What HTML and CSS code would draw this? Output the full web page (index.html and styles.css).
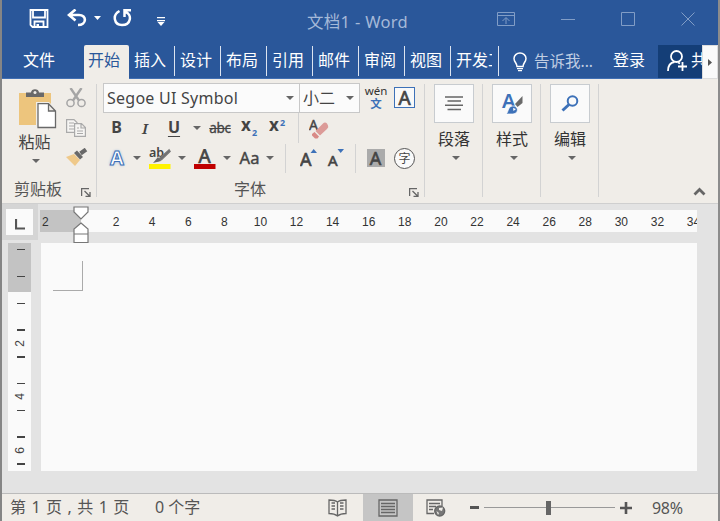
FILE: index.html
```html
<!DOCTYPE html>
<html lang="zh-CN">
<head>
<meta charset="utf-8">
<title>文档1 - Word</title>
<link rel="stylesheet" href="styles.css">
</head>
<body>
<div class="window">
  <header class="titlebar">
    <div class="quick">
      <svg class="save" width="20" height="20" viewBox="0 0 20 20"><path d="M1.500 1H18.500V18H3.500L1.500 16ZM4 1V8.500H16V1M5.500 18V12.500H14.500V18" fill="none" stroke="#fff" stroke-width="1.800"/><path d="M7.500 15h2.500v3H7.500z" fill="#fff"/></svg>
      <svg class="undo" width="20" height="20" viewBox="0 0 20 20"><path d="M2 6H12C20 6 20 16 11 16M8.500.5L2 6L8.500 11.500" fill="none" stroke="#fff" stroke-width="2.600"/></svg>
      <svg class="undo-arrow" width="7" height="4" viewBox="0 0 7 4"><path d="M0 0H7L3.500 4Z" fill="#fff"/></svg>
      <svg class="redo" width="20" height="20" viewBox="0 0 20 20"><path d="M6.500 2C-1 6 1 16 9 16C18 16 19.500 5.500 12.500 3M18 1.300H11.500V8" fill="none" stroke="#fff" stroke-width="2.500"/></svg>
      <svg class="customize" width="8" height="9" viewBox="0 0 8 9"><path d="M0 0H8V1.300H0ZM0 3H8V4.300H0ZM.5 5H7.500L4 9Z" fill="#fff"/></svg>
    </div>
    <div class="doc-title">文档1 - Word</div>
    <div class="controls">
      <svg width="18" height="14" viewBox="0 0 18 14"><path d="M.5.5H17.500V13.500H.5ZM.5 3.500H17.500M9 12V6M5.500 9L9 5.500L12.500 9"/></svg>
      <svg width="14" height="14" viewBox="0 0 14 14"><path d="M0 7.500H14"/></svg>
      <svg width="14" height="14" viewBox="0 0 14 14"><path d="M.5.5H13.500V13.500H.5Z"/></svg>
      <svg width="14" height="14" viewBox="0 0 14 14"><path d="M.5.5L13.500 13.500M13.500.5L.5 13.500"/></svg>
    </div>
  </header>

  <nav class="tabs">
    <div class="file">文件</div>
    <div class="tab active">开始</div>
    <div class="tab">插入</div>
    <div class="tab">设计</div>
    <div class="tab">布局</div>
    <div class="tab">引用</div>
    <div class="tab">邮件</div>
    <div class="tab">审阅</div>
    <div class="tab">视图</div>
    <div class="tab dev"><span>开发工</span></div>
    <div class="tell">
      <svg width="14" height="20" viewBox="0 0 14 20"><path d="M4 14.500C4 11 1 10 1 6.500A6 5.500 0 0 1 13 6.500C13 10 10 11 10 14.500Z" fill="none" stroke="#fff" stroke-width="1.500"/><path d="M4 16H10V17.200H4ZM5 18H9V19.300H5Z" fill="#fff"/></svg>
      <span>告诉我...</span>
    </div>
    <div class="login">登录</div>
    <div class="share">
      <svg width="21" height="22" viewBox="0 0 21 22"><circle cx="9.500" cy="6.500" r="5.500"/><path d="M1 21C1 15 4 12.500 7.500 12M11 12.500L13 13.500M15.500 12V21M11 16.500H20"/></svg>
      <span>共</span>
    </div>
    <div class="scroll"><svg width="4" height="7" viewBox="0 0 4 7"><path d="M0 0L4 3.500L0 7Z" fill="#555"/></svg></div>
  </nav>

  <section class="ribbon">
    <div class="group clipboard">
      <div class="clip-main">
        <div class="paste">
          <svg width="38" height="40" viewBox="0 0 38 40"><path d="M0 4H32V36H0Z" fill="#edc57d"/><path d="M7 8V3.500H12C12-1 20-1 20 3.500H25V8Z" fill="#696969"/><circle cx="16" cy="3.500" r="1.500" fill="#f0ede8"/><path d="M17 13H30L38 21V40H17Z" fill="#f0ede8"/><path d="M19 14.700H29.500L36.500 22V38.500H19ZM29.500 14.700V22H36.500" fill="#fff" stroke="#696969" stroke-width="1.300"/></svg>
          <span>粘贴</span>
          <i class="arrow"></i>
        </div>
        <div class="clip-tools">
          <svg width="20" height="20" viewBox="0 0 20 20"><path d="M4.500 0L13 12.500M15.500 0L7 12.500" fill="none" stroke="#a5a5a5" stroke-width="2.400"/><g fill="none" stroke="#a5a5a5" stroke-width="1.500"><circle cx="4.500" cy="15" r="3.600"/><circle cx="15.500" cy="15" r="3.600"/></g></svg>
          <svg width="20" height="18" viewBox="0 0 20 18"><g fill="#f6f5f3" stroke="#aaa" stroke-width="1.200"><path d="M.6.6H8L11 3.500V13.400H.6Z"/><path d="M3 4H8M3 7H8M3 10H8"/><path d="M8.600 4.600H15.500L19.400 8.500V17.400H8.600ZM15 5V9H19M11 9H13M11 12H17M11 14.500H17"/></g></svg>
          <svg width="22" height="19" viewBox="0 0 22 19"><path d="M0 9L8 6L14 12L9 18Z" fill="#efc98a"/><path d="M8 5L11 2.500L17 9L14 11.500Z" fill="#696969"/><path d="M14.500 5.500L20 1.500" stroke="#696969" stroke-width="4.200"/></svg>
        </div>
      </div>
      <div class="caption clip-caption"><span>剪贴板</span><svg class="launcher" width="10" height="9" viewBox="0 0 10 9"><path d="M.6 8V.6H8M3.500 3L8.500 8M9 4V8.400H4.500" /></svg></div>
    </div>

    <div class="group font">
      <div class="row fields">
        <div class="combo family"><span>Segoe UI Symbol</span><i class="arrow"></i></div>
        <div class="combo size"><span>小二</span><i class="arrow"></i></div>
        <svg class="phonetic" width="24" height="24" viewBox="0 0 24 24"><text x="12" y="9" font-size="11.500" text-anchor="middle" fill="#333">wén</text><text class="han" x="12" y="22" font-size="11.500" font-weight="700" text-anchor="middle" fill="#3d71b8">文</text></svg>
        <div class="boxed">A</div>
      </div>
      <div class="row styles">
        <b>B</b><em>I</em><b class="under">U</b><i class="arrow"></i><s>abc</s>
        <svg width="18" height="18" viewBox="0 0 18 18"><text x="0" y="12" font-size="17" font-weight="700" fill="#444">x</text><text x="11" y="17" font-size="9" font-weight="700" fill="#3d71b8">2</text></svg>
        <svg width="18" height="18" viewBox="0 0 18 18"><text x="0" y="12" font-size="17" font-weight="700" fill="#444">x</text><text x="11" y="7" font-size="9" font-weight="700" fill="#3d71b8">2</text></svg>
        <i class="rule tall"></i>
        <svg class="eraser" width="20" height="20" viewBox="0 0 20 20"><text x="0" y="11" font-size="14" fill="#444" stroke="#444" stroke-width=".4">A</text><path d="M6.500 12L14 4.500Q16 2.500 18 4.500L19 6.500Q20 8 18 10L11 16.500Z" fill="#dc9b98"/><path d="M5.500 13L10 17.500L8.500 19.500H6L3 16.500V15Z" fill="#d98a87"/></svg>
      </div>
      <div class="row effects">
        <span class="glow">A</span><i class="arrow"></i>
        <svg width="22" height="22" viewBox="0 0 22 22"><text x="0" y="10" font-size="12.500" font-weight="600" fill="#444">ab</text><path d="M20 3L11 11L9.500 13.500L12.500 12.500L21 4.500Z" fill="#696969" stroke="#777" stroke-width="1.500"/><path d="M9 10L12 14L4 16Z" fill="#696969"/><path d="M0 17H21.500V22H0Z" fill="#fff200"/></svg><i class="arrow"></i>
        <svg class="color" width="22" height="20" viewBox="0 0 22 20"><text x="10.700" y="14" font-size="19" text-anchor="middle" fill="#444" stroke="#444" stroke-width=".7">A</text><path d="M0 15H21.500V20H0Z" fill="#c00000"/></svg><i class="arrow"></i>
        <span class="case">Aa</span><i class="arrow"></i>
        <i class="rule"></i>
        <svg width="18" height="20" viewBox="0 0 18 20"><text x="0" y="18" font-size="18" fill="#444" stroke="#444" stroke-width=".6">A</text><path d="M10.500 5L13.700 1L17 5Z" fill="#3d71b8"/></svg>
        <svg width="18" height="20" viewBox="0 0 18 20"><text x="1" y="18" font-size="15" fill="#444" stroke="#444" stroke-width=".6">A</text><path d="M10.500 1H17L13.700 5Z" fill="#3d71b8"/></svg>
        <i class="rule"></i>
        <span class="shade">A</span>
        <span class="circled">字</span>
      </div>
      <div class="caption font-caption"><span>字体</span><svg class="launcher" width="10" height="9" viewBox="0 0 10 9"><path d="M.6 8V.6H8M3.500 3L8.500 8M9 4V8.400H4.500" /></svg></div>
    </div>

    <div class="group large">
      <div class="tile"><svg width="18" height="15" viewBox="0 0 18 15"><path d="M0 1H18M2.500 5H16M0 9.300H18M2.500 13.500H16" stroke="#666" stroke-width="1.400"/></svg></div>
      <span>段落</span><i class="arrow"></i>
    </div>
    <div class="group large">
      <div class="tile"><svg width="22" height="23" viewBox="0 0 22 23"><text x="1" y="16" font-size="20" font-weight="600" fill="#3d71b8">A</text><path d="M21.500 4V11L16.500 15L14 12Z" fill="#696969"/><path d="M5 22C8 20 6 16 11 14C17 13 19 21 12 22Z" fill="#3d71b8" stroke="#fff" stroke-width=".7"/><path d="M12 16L15 17L12.500 19" fill="#fff"/></svg></div>
      <span>样式</span><i class="arrow"></i>
    </div>
    <div class="group large">
      <div class="tile"><svg width="18" height="17" viewBox="0 0 18 17"><circle cx="11.500" cy="6" r="4.800" fill="none" stroke="#3d71b8" stroke-width="2"/><path d="M8 9.500L1.500 15.500" stroke="#3d71b8" stroke-width="3"/></svg></div>
      <span>编辑</span><i class="arrow"></i>
    </div>
    <svg class="collapse" width="13" height="9" viewBox="0 0 13 9"><path d="M1.500 7.500L6.500 2.500L11.500 7.500" fill="none" stroke="#666" stroke-width="2.800"/></svg>
  </section>

  <main class="workspace">
    <div class="corner"><div><svg width="10" height="11" viewBox="0 0 10 11"><path d="M1 0V9.500H10" fill="none" stroke="#555" stroke-width="2.200"/></svg></div></div>
    <div class="hruler">
      <div class="margin">2</div>
      <div class="numbers"><span>2</span><span>4</span><span>6</span><span>8</span><span>10</span><span>12</span><span>14</span><span>16</span><span>18</span><span>20</span><span>22</span><span>24</span><span>26</span><span>28</span><span>30</span><span>32</span><span>34</span></div>
      <svg class="indent" width="16" height="38" viewBox="0 0 16 38"><g fill="#fff" stroke="#777" stroke-width="1.200"><path d="M1 1H15V6L8 13L1 6ZM8 17L15 23V28H1V23ZM1 28H15V36.500H1Z"/></g></svg>
    </div>
    <div class="vruler">
      <i></i><span></span><i></i><span></span><i></i><span></span><i></i><b>2</b><i></i><span></span><i></i><b>4</b><i></i><span></span><i></i><b>6</b><i></i>
    </div>
    <div class="page"><div class="crop"></div></div>
  </main>

  <footer class="status">
    <span class="pages">第 1 页 , 共 1 页</span>
    <span class="words">0 个字</span>
    <div class="views">
      <div><svg width="20" height="18" viewBox="0 0 20 18"><path d="M9.500 3C7 1 4 1 1 1V14.500C4 14.500 7 15 9.500 17C12 15 15 14.500 18 14.500V1C15 1 12 1 9.500 3V17M3.500 4H7M3.500 7H7M3.500 10H7M12 4H15.500M12 7H15.500M12 10H15.500"/></svg></div>
      <div class="selected"><svg width="20" height="18" viewBox="0 0 20 18"><path d="M1 1H19V17H1ZM3 4.500H17M3 7.500H17M3 10.500H17M3 13.500H17"/></svg></div>
      <div><svg width="20" height="18" viewBox="0 0 20 18"><path d="M8 14.500H1V1H16V7M3 4.500H14M3 7.500H10M3 10.500H7"/><circle cx="13.700" cy="12" r="5" fill="#777"/><path d="M13 9L17 8.500L16 12L13 11ZM10.500 12L13 14L12 16Z" fill="#f0ede8" stroke="none"/></svg></div>
    </div>
    <div class="zoom">
      <svg width="9" height="3" viewBox="0 0 9 3"><path d="M0 0H9V3H0Z" fill="#555"/></svg>
      <div class="track"><i></i></div>
      <svg width="12" height="12" viewBox="0 0 12 12"><path d="M6 0V12M0 6H12" stroke="#555" stroke-width="2.600"/></svg>
      <span>98%</span>
    </div>
  </footer>
</div>
</body>
</html>
```
FILE: styles.css
```css
* { box-sizing: border-box; }
body { margin: 0; }
svg { display: block; flex: none; }
.window {
  display: grid;
  grid-template-rows: 45px 34px 125px 289px 28px;
  width: 720px;
  height: 521px;
  overflow: hidden;
  border-left: 2px solid #858585;
  border-right: 2px solid #8c8c8c;
  background: #e3e3e3;
  color: #444;
  font: 16px/20px "Noto Sans", "Noto Sans CJK SC", sans-serif;
}
.titlebar { display: grid; grid-template-columns: 305px 190px 1fr; background: #2a579a; }
.quick { display: flex; align-items: flex-start; padding: 9px 0 0 27px; }
.undo { margin-left: 18px; }
.undo-arrow { margin: 7px 0 0 7px; }
.redo { margin-left: 12px; }
.customize { margin: 8px 0 0 24px; }
.doc-title { padding-top: 12px; font-size: 16.5px; letter-spacing: .3px; color: #a5b9d8; white-space: nowrap; }
.controls { display: flex; justify-content: space-between; padding: 12px 23px 0 0; }
.controls path { fill: none; stroke: #819dc6; }

.tabs { display: flex; background: #2a579a; color: #fff; border-bottom: 1px solid #416fb3; white-space: nowrap; }
.file { width: 82px; padding: 5px 0 0 21px; }
.tab { position: relative; width: 46px; padding: 5px 0 0 5px; }
.tab:not(.active)::after { content: ""; position: absolute; right: 0; top: 1px; width: 1.5px; height: 30px; background: #dce4f0; }
.active { width: 45px; height: 34px; padding-left: 4px; background: #f0ede8; color: #2a579a; border-radius: 2px 2px 0 0; }
.dev { width: 48px; }
.dev span { display: block; width: 36px; overflow: hidden; }
.tell { display: flex; align-items: flex-start; gap: 7px; width: 114px; padding: 7px 0 0 14px; color: #c1cee3; }
.tell span { margin-top: -1px; font-size: 15.5px; }
.login { width: 45px; padding-top: 5px; }
.share { display: flex; gap: 3px; width: 44px; height: 33px; padding: 5px 0 0 9px; overflow: hidden; background: #143e77; }
.share circle, .share path { fill: none; stroke: #fff; stroke-width: 1.8; }
.scroll { display: grid; place-items: center; width: 16px; height: 34px; background: #fafafa; border: 1px solid #ddd; }

.ribbon { display: flex; background: #f0ede8; border-bottom: 1px solid #cfcfcf; }
.group { position: relative; }
.group::after { content: ""; position: absolute; right: 0; top: 5px; width: 1px; height: 113px; background: #d3d3d3; }
.arrow { width: 0; height: 0; border: 4px solid transparent; border-top-color: #666; border-bottom: 0; }
.clipboard { width: 95px; }
.clip-main { display: flex; height: 100px; }
.paste { display: flex; flex-direction: column; align-items: center; width: 58px; margin-right: 6px; padding: 10px 0 0 13px; }
.paste span { margin: 3px 0 7px -6px; }
.paste .arrow { margin-left: -3px; }
.clip-tools { display: flex; flex-direction: column; gap: 11px; padding-top: 9px; }
.caption { display: flex; color: #555; }
.clip-caption { padding-left: 12px; }
.clip-caption span { width: 67px; }
.launcher { margin-top: 9px; }
.launcher path { fill: none; stroke: #666; stroke-width: 1.3; }
.font { width: 328px; padding: 4px 0 0 6px; }
.row { display: grid; align-items: center; }
.fields { grid-template-columns: 197px 60px 34px 21px; height: 30px; }
.combo { display: flex; align-items: center; justify-content: space-between; height: 30px; padding: 0 5px 0 3px; background: #fbfbfb; border: 1px solid #c8c8c8; }
.family { font-size: 16px; letter-spacing: .25px; }
.size { margin-left: -1px; }
.phonetic { margin-left: 4px; }
.phonetic .han { font-family: "Noto Sans CJK SC"; }
.boxed { display: grid; place-items: center; width: 21px; height: 21px; margin-top: -1px; font-size: 19px; border: 1.5px solid #3d71b8; background: #f9f9f9; -webkit-text-stroke: .7px #444; }
.styles { grid-template-columns: 27px 30px 28px 17px 30px 29px 28px 12px 30px; justify-items: center; height: 29px; }
.styles em { font: italic 600 16px "Noto Serif", "DejaVu Serif", serif; font-size: 15px; }
.styles b { margin-top: -2px; }
.under { text-decoration: underline; text-underline-offset: 3px; }
.styles s { font-size: 13.5px; letter-spacing: -.3px; -webkit-text-stroke: .3px #444; }
.rule { width: 1px; height: 29px; background: #d3d3d3; }
.tall { height: 30px; }
.eraser { margin-top: 1px; }
text { font-family: "Noto Sans"; }
.effects { grid-template-columns: 28px 11px 36px 8px 38px 6px 40px 0 30px 17px 37px 3px 37px 21px; justify-items: center; height: 32px; }
.glow { font: 700 20px/22px "Noto Sans"; color: #fff; -webkit-text-stroke: 1px #3d71b8; text-shadow: 0 0 3px #6f9bd5; }
.color { margin-top: 1px; }
.case { margin-left: -1px; font-size: 16.5px; -webkit-text-stroke: .4px #444; }
.shade { width: 18px; height: 18px; font-size: 18px; line-height: 18px; text-align: center; background: #ababab; -webkit-text-stroke: .6px #444; }
.circled { display: grid; place-items: center; width: 21px; height: 21px; font-size: 12px; border: 1.3px solid #555; border-radius: 50%; background: #fafafa; }
.font-caption { padding: 5px 0 0 131px; }
.font-caption span { width: 175px; }
.large { display: flex; flex-direction: column; align-items: center; width: 58px; padding-top: 5px; color: #333; }
.tile { display: grid; place-items: center; width: 40px; height: 39px; background: #fafafa; border: 1px solid #c8ccd0; }
.large span { margin: 6px 0 7px; }
.large .arrow { margin-left: 4px; }
.collapse { margin: 108px 0 0 94px; }

.workspace { display: grid; grid-template-columns: 38px 657px; grid-template-rows: 39px 228px; }
.corner { width: 36px; height: 36px; padding: 5px 4px; background: #d5d5d5; }
.corner div { display: grid; place-items: center; width: 27px; height: 26px; background: #fafafa; }
.corner svg { margin-top: 5px; }
.hruler { position: relative; display: flex; width: 657px; height: 22px; margin-top: 6px; background: #fafafa; font: 12px/24px "Liberation Sans", sans-serif; color: #333; }
.margin { width: 41px; padding-left: 2px; background: #c3c3c3; }
.numbers { display: flex; width: 616px; padding-left: 17px; overflow: hidden; }
.numbers span { flex: 0 0 36.1px; text-align: center; }
.indent { position: absolute; left: 33px; top: -4px; }
.vruler { display: grid; grid-template-rows: repeat(17, 13.4px); place-items: center; width: 23px; height: 228px; margin-left: 6px; padding-left: 2px; background: linear-gradient(#c3c3c3 49px, #fafafa 49px); }
.vruler i { width: 8px; height: 1.5px; background: #444; }
.vruler b { font: 12px/13px "Liberation Sans"; transform: rotate(-90deg); }
.page { padding: 18px 0 0 12px; margin-left: 1px; background: #fafafa; }
.crop { width: 30px; height: 30px; border: solid #aaa; border-width: 0 1px 1px 0; }

.status { display: flex; background: #f0ede8; border-top: 1px solid #bbb; color: #555; white-space: nowrap; }
.pages { width: 145px; padding: 3px 0 0 8px; word-spacing: 1.3px; }
.words { width: 168px; padding: 3px 0 0 8px; }
.views { display: flex; }
.views div { width: 48px; padding: 5px 0 0 13px; }
.views .selected { width: 50px; padding-left: 15px; background: #c5c5c5; }
.views svg { fill: none; stroke: #666; stroke-width: 1.3; }
.zoom { display: flex; align-items: center; padding-left: 9px; }
.track { display: flex; align-items: center; width: 131px; height: 15px; margin: 0 5px; background: linear-gradient(#999, #999) center / 100% 1px no-repeat; }
.track i { width: 5px; height: 14px; margin-left: 62px; background: #666; }
.zoom span { margin-left: 20px; letter-spacing: -.3px; }
```
